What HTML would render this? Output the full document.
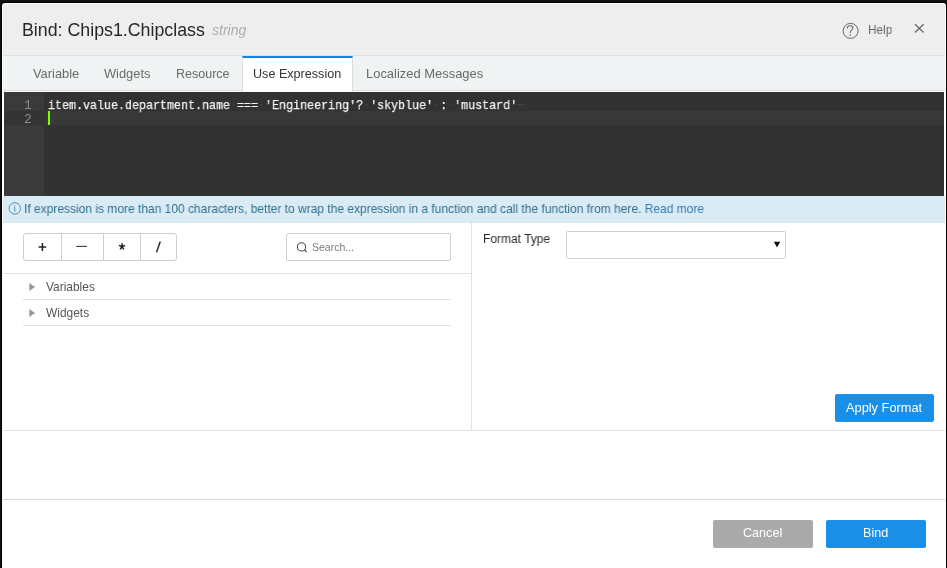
<!DOCTYPE html>
<html><head><meta charset="utf-8">
<style>
*{box-sizing:border-box;margin:0;padding:0}
html,body{width:947px;height:568px;overflow:hidden;background:#111;font-family:"Liberation Sans",sans-serif}
.a{position:absolute;white-space:nowrap;will-change:transform}
#dlg{position:absolute;left:2px;top:3px;width:944px;height:580px;background:#fff;border-radius:3px;box-shadow:0 0 0 1px #000}
#hdr{position:absolute;left:3px;top:4px;width:942px;height:51px;background:#eee;border-radius:2px 2px 0 0}
#hdrline{position:absolute;left:3px;top:55px;width:942px;height:1px;background:#dedede}
#tabbar{position:absolute;left:3px;top:56px;width:942px;height:34px;background:#f0f3f4}
#tabline{position:absolute;left:3px;top:90px;width:942px;height:1px;background:#dde0e1}
#acttab{position:absolute;left:242px;top:56px;width:111px;height:36px;background:#fff;border-left:1px solid #dedede;border-right:1px solid #dedede;border-top:2px solid #0a84e6}
.tab{font-size:12.9px;line-height:13px;color:#6a6a6a}
#editor{position:absolute;left:4px;top:92px;width:940px;height:104px;background:#323232}
#gutter{position:absolute;left:4px;top:92px;width:40px;height:104px;background:#3a3a3a}
#actline{position:absolute;left:45px;top:111px;width:899px;height:14px;background:#383838}
#actgut{position:absolute;left:4px;top:111px;width:40px;height:14px;background:#343434}
.code{font-family:"Liberation Mono",monospace;font-size:13.5px;line-height:14px;color:#f4f4f4;transform:scaleX(0.8642);transform-origin:0 0;-webkit-text-stroke:0.25px #f4f4f4}
.ws{color:#444;-webkit-text-stroke:0}
.ln{font-family:"Liberation Mono",monospace;font-size:13px;line-height:14px;color:#8a8a8a}
#cursor{position:absolute;left:48px;top:111px;width:2px;height:14px;background:#7cff00}
#info{position:absolute;left:3px;top:196px;width:942px;height:27px;background:#d9ecf6;border:1px solid #e2e6e8;border-top:none}
.infot{font-size:12.4px;line-height:12px;color:#31708f;transform:scaleX(0.968);transform-origin:0 0}
.btng{position:absolute;top:233px;height:28px;border:1px solid #cfcfcf;background:#fff}
.sym{font-size:13px;color:#333;font-weight:bold;text-align:center}
.sep{position:absolute;height:1px;background:#e2e2e2}
.vsep{position:absolute;width:1px;background:#e2e2e2}
.btn{position:absolute;height:28px;border-radius:2px;color:#fff;text-align:center}
</style></head>
<body>
<div id="dlg"></div>
<div id="hdr"></div>
<div id="hdrline"></div>
<div class="a" style="left:22px;top:21px;font-size:17.8px;line-height:18px;color:#282828">Bind: Chips1.Chipclass</div>
<div class="a" style="left:211.5px;top:23.3px;font-size:14px;line-height:14px;color:#adadad;font-style:italic">string</div>
<!-- help icon -->
<svg class="a" style="left:840px;top:21px" width="22" height="20" viewBox="0 0 22 20">
  <circle cx="10.6" cy="9.9" r="7.5" fill="none" stroke="#666" stroke-width="1"/>
  <path d="M7.3 7.4 C7.3 5.6 8.6 4.8 10.2 4.8 C11.8 4.8 12.9 5.8 12.9 7.1 C12.9 8.7 10.4 9.3 10.3 11.4 L10.3 12.0" fill="none" stroke="#666" stroke-width="1.05"/>
  <circle cx="10.3" cy="14.3" r="0.75" fill="#666"/>
</svg>
<div class="a" style="left:868px;top:24px;font-size:12.6px;line-height:13px;color:#666;transform:scaleX(0.935);transform-origin:0 0">Help</div>
<svg class="a" style="left:913px;top:22px" width="13" height="13" viewBox="0 0 13 13">
  <path d="M2.0 2.3 L10.6 10.5 M10.6 2.3 L2.0 10.5" stroke="#666" stroke-width="1.25"/>
</svg>

<div id="tabbar"></div>
<div id="tabline"></div>
<div id="acttab"></div>
<div class="a tab" style="left:33px;top:67px;font-size:12.87px">Variable</div>
<div class="a tab" style="left:104px;top:67px;font-size:12.85px">Widgets</div>
<div class="a tab" style="left:175.5px;top:68px;font-size:12.5px">Resource</div>
<div class="a tab" style="left:253px;top:68px;color:#333;font-size:12.6px">Use Expression</div>
<div class="a tab" style="left:366px;top:67px;font-size:12.95px">Localized Messages</div>

<div id="editor"></div>
<div id="gutter"></div>
<div id="actline"></div>
<div id="actgut"></div>
<div class="a ln" style="left:24px;top:98.5px">1</div>
<div class="a ln" style="left:24px;top:112.5px">2</div>
<div class="a code" style="left:48px;top:98.5px">item.value.department.name<span class="ws">·</span>===<span class="ws">·</span>'Engineering'?<span class="ws">·</span>'skyblue'<span class="ws">·</span>:<span class="ws">·</span>'mustard'<span class="ws">¬</span></div>
<div id="cursor"></div>
<div class="a" style="left:51px;top:113px;width:3px;height:11px;border:1px solid #3f3f3f"></div>

<div id="info"></div>
<svg class="a" style="left:8px;top:202px" width="14" height="14" viewBox="0 0 14 14">
  <circle cx="6.8" cy="6.4" r="5.7" fill="none" stroke="#4a86a6" stroke-width="0.9"/>
  <rect x="6.35" y="4.8" width="0.9" height="4.9" fill="#4a86a6"/>
  <rect x="6.35" y="3" width="0.9" height="0.9" fill="#4a86a6"/>
</svg>
<div class="a infot" style="left:23.8px;top:202.5px">If expression is more than 100 characters, better to wrap the expression in a function and call the function from here. <span style="color:#337ab7">Read more</span></div>

<!-- operators -->
<div class="btng" style="left:23px;width:154px;border-radius:3px"></div>
<div class="vsep" style="left:61px;top:233px;height:28px;background:#cfcfcf"></div>
<div class="vsep" style="left:103px;top:233px;height:28px;background:#cfcfcf"></div>
<div class="vsep" style="left:140px;top:233px;height:28px;background:#cfcfcf"></div>
<svg class="a" style="left:23px;top:233px" width="154" height="28" viewBox="0 0 154 28">
  <path d="M19.4 10 L19.4 18 M15.6 14.1 L23.2 14.1" stroke="#222" stroke-width="1.5"/>
  <path d="M53.2 13.4 L63.9 13.4" stroke="#3a3a3a" stroke-width="1.1"/>
  <path d="M99 10.2 L99 13.6 M95.9 12.4 L99 13.6 L102.1 12.4 M97.2 16.4 L99 13.6 L100.8 16.4" stroke="#222" stroke-width="1.5" fill="none"/>
  <path d="M137.3 8.4 L133.5 19.3" stroke="#222" stroke-width="1.4"/>
</svg>
<!-- search -->
<div class="a" style="left:286px;top:233px;width:165px;height:28px;border:1px solid #cfcfcf;border-radius:2px"></div>
<svg class="a" style="left:295px;top:241px" width="14" height="14" viewBox="0 0 14 14">
  <circle cx="6.5" cy="5.9" r="4.1" fill="none" stroke="#3a3a3a" stroke-width="1"/>
  <path d="M9.5 8.9 L11.6 11.1" stroke="#3a3a3a" stroke-width="1.1"/>
</svg>
<div class="a" style="left:312px;top:241px;font-size:10.5px;line-height:12px;color:#7a7a7a">Search...</div>

<div class="sep" style="left:3px;top:273px;width:468px"></div>
<div class="vsep" style="left:471px;top:222px;height:209px"></div>
<div class="sep" style="left:23px;top:299px;width:428px"></div>
<div class="sep" style="left:23px;top:325px;width:428px"></div>
<svg class="a" style="left:28px;top:282px" width="9" height="10" viewBox="0 0 9 10"><path d="M1.3 0.9 L7 5 L1.3 9.1 Z" fill="#999"/></svg>
<svg class="a" style="left:28px;top:308px" width="9" height="10" viewBox="0 0 9 10"><path d="M1.3 0.9 L7 5 L1.3 9.1 Z" fill="#999"/></svg>
<div class="a" style="left:46px;top:281px;font-size:11.95px;line-height:12px;color:#555">Variables</div>
<div class="a" style="left:46px;top:307px;font-size:11.95px;line-height:12px;color:#555">Widgets</div>

<!-- format -->
<div class="a" style="left:483px;top:233px;font-size:12.3px;line-height:12px;color:#2a2a2a;transform:scaleX(0.975);transform-origin:0 0">Format Type</div>
<div class="a" style="left:566px;top:231px;width:220px;height:28px;border:1px solid #d0d0d0;border-radius:2px"></div>
<svg class="a" style="left:772px;top:240.4px" width="10" height="9" viewBox="0 0 10 9"><path d="M1.8 1.8 L8.2 1.8 L5 7.6 Z" fill="#111"/></svg>
<div class="btn" style="left:835px;top:394px;width:99px;background:#1a8fe8"></div>
<div class="a" style="left:846px;top:401px;font-size:12.8px;line-height:13px;color:#fff">Apply Format</div>

<div class="sep" style="left:3px;top:430px;width:942px"></div>
<div class="sep" style="left:3px;top:499px;width:942px;background:#d6d6d6"></div>

<div class="btn" style="left:713px;top:520px;width:100px;background:#aaa"></div>
<div class="a" style="left:743px;top:526.5px;font-size:12.6px;line-height:13px;color:#fff">Cancel</div>
<div class="btn" style="left:826px;top:520px;width:100px;background:#1a8fe8"></div>
<div class="a" style="left:863px;top:526.5px;font-size:12.6px;line-height:13px;color:#fff">Bind</div>
</body></html>
